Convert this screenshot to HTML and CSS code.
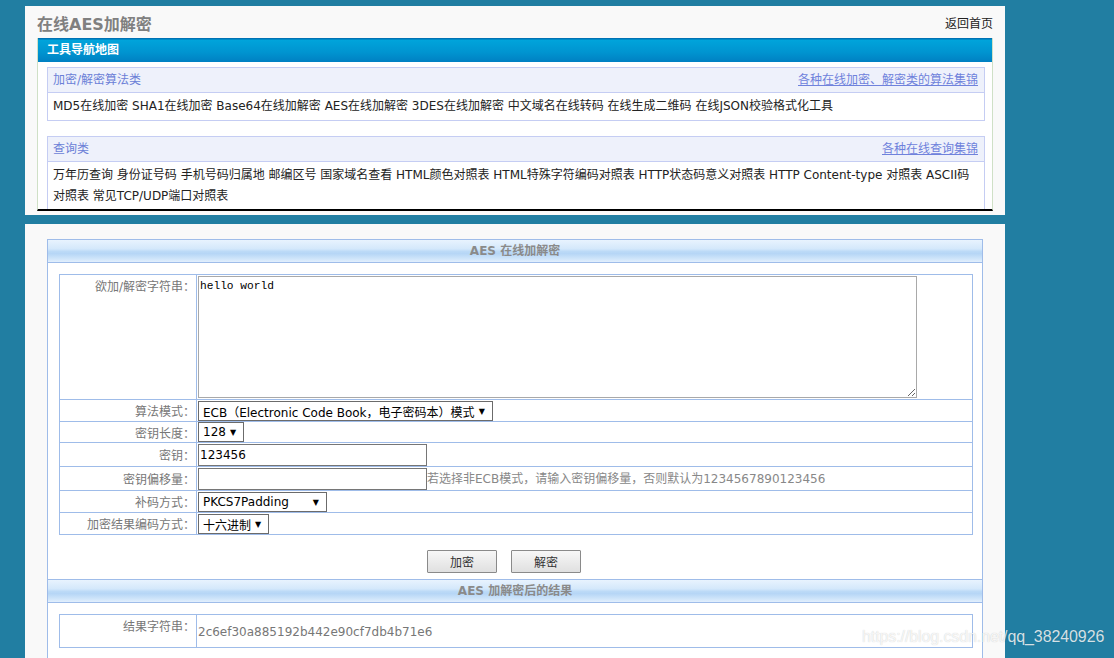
FILE: index.html
```html
<!DOCTYPE html>
<html lang="zh-CN">
<head>
<meta charset="utf-8">
<title>在线AES加解密</title>
<link rel="stylesheet" href="styles.css">
</head>
<body>
<div class="panel panel-top">
  <div class="titlebar">
    <h1 class="title">在线AES加解密</h1>
    <a class="home" href="#">返回首页</a>
  </div>
  <div class="nav">
    <div class="nav-head">工具导航地图</div>
    <div class="sec">
      <div class="sec-head"><span>加密/解密算法类</span><a href="#">各种在线加密、解密类的算法集锦</a></div>
      <div class="sec-body">MD5在线加密 SHA1在线加密 Base64在线加解密 AES在线加解密 3DES在线加解密 中文域名在线转码 在线生成二维码 在线JSON校验格式化工具</div>
    </div>
    <div class="sec sec-last">
      <div class="sec-head"><span>查询类</span><a href="#">各种在线查询集锦</a></div>
      <div class="sec-body sec-body-2">万年历查询 身份证号码 手机号码归属地 邮编区号 国家域名查看 HTML颜色对照表 HTML特殊字符编码对照表 HTTP状态码意义对照表 HTTP Content-type 对照表 ASCII码对照表 常见TCP/UDP端口对照表</div>
    </div>
  </div>
</div>

<div class="panel panel-main">
  <div class="box">
    <div class="band">AES 在线加解密</div>
    <div class="pad">
      <table class="form">
        <tr class="r-text">
          <td class="lab lab-top">欲加/解密字符串：</td>
          <td class="val"><textarea class="txt">hello world</textarea></td>
        </tr>
        <tr class="r-a">
          <td class="lab">算法模式：</td>
          <td class="val"><span class="select w-mode">ECB（Electronic Code Book，电子密码本）模式</span></td>
        </tr>
        <tr class="r-b">
          <td class="lab">密钥长度：</td>
          <td class="val"><span class="select w-len">128</span></td>
        </tr>
        <tr class="r-c">
          <td class="lab">密钥：</td>
          <td class="val"><input class="inp" type="text" value="123456"></td>
        </tr>
        <tr class="r-c">
          <td class="lab">密钥偏移量：</td>
          <td class="val"><input class="inp" type="text" value=""><span class="hint">若选择非ECB模式，请输入密钥偏移量，否则默认为1234567890123456</span></td>
        </tr>
        <tr class="r-a">
          <td class="lab">补码方式：</td>
          <td class="val"><span class="select w-pad">PKCS7Padding</span></td>
        </tr>
        <tr class="r-a">
          <td class="lab">加密结果编码方式：</td>
          <td class="val"><span class="select w-enc">十六进制</span></td>
        </tr>
      </table>
    </div>
    <div class="btns">
      <button class="btn" type="button">加密</button>
      <button class="btn" type="button">解密</button>
    </div>
    <div class="band band-mid">AES 加解密后的结果</div>
    <div class="pad">
      <table class="form result">
        <tr class="r-res">
          <td class="lab lab-top lab-res">结果字符串：</td>
          <td class="val res-val">2c6ef30a885192b442e90cf7db4b71e6</td>
        </tr>
      </table>
    </div>
    <div class="band band-mid band-empty"></div>
  </div>
</div>

<div class="watermark">https://blog.csdn.net/qq_38240926</div>
</body>
</html>
```

FILE: styles.css
```css
html, body {
  margin: 0;
  padding: 0;
}
body {
  background: #217ea2;
  font-family: "DejaVu Sans", "Noto Sans CJK SC", sans-serif;
  font-size: 12px;
  color: #333;
  height: 658px;
  overflow: hidden;
  position: relative;
}
a { color: inherit; text-decoration: none; }

.panel {
  width: 956px;
  margin-left: 25px;
  padding: 0 12px;
  background: #f9f9f9;
}
.panel-top {
  margin-top: 6px;
  padding-bottom: 4px;
}
.titlebar {
  height: 32px;
  display: flex;
  justify-content: space-between;
  align-items: flex-start;
}
.title {
  margin: 0;
  padding-top: 9px;
  font-size: 16px;
  line-height: 20px;
  font-weight: bold;
  color: #808080;
}
.home {
  padding-top: 10px;
  line-height: 16px;
  color: #222;
}

.nav {
  background: #fff;
  border-left: 1px solid #cfe0c6;
  border-right: 1px solid #cfe0c6;
  border-bottom: 2px solid #000;
}
.nav-head {
  height: 24px;
  line-height: 25px;
  padding-left: 9px;
  background: linear-gradient(#0072b4 0, #0072b4 1px, #00a4db 2px, #0094d0 60%, #0080c2 100%);
  color: #fff;
  font-weight: bold;
}
.sec {
  margin: 5px 7px 0 9px;
  border: 1px solid #c5cdf3;
}
.sec-last {
  margin-top: 15px;
  border-bottom: 0;
}
.sec-head {
  height: 24px;
  line-height: 24px;
  padding: 0 6px 0 5px;
  background: #eef1fb;
  border-bottom: 1px solid #c5cdf3;
  display: flex;
  justify-content: space-between;
  color: #6b7fd7;
}
.sec-head a {
  color: #6f82dc;
  text-decoration: underline;
}
.sec-body {
  height: 27px;
  line-height: 26px;
  padding-left: 5px;
  color: #222;
}
.sec-body-2 {
  height: 44px;
  line-height: 21px;
  padding-top: 3px;
  padding-right: 4px;
}

.panel-main {
  margin-top: 9px;
  padding: 15px 22px 0;
  width: 936px;
  height: 419px;
  overflow: hidden;
}
.box {
  background: #fff;
  border: 1px solid #9fbce9;
  width: 934px;
}
.band {
  height: 22px;
  line-height: 23px;
  text-align: center;
  font-weight: bold;
  color: #8a8a8a;
  border-bottom: 1px solid #9fbce9;
  background: linear-gradient(#e8f3fe 0%, #d4e8fb 40%, #bcdaf7 52%, #b6d6f6 62%, #cfe5fa 85%, #e2effd 100%);
}
.band-mid {
  border-top: 1px solid #9fbce9;
}
.pad {
  padding: 11px 9px 0 11px;
}
.form {
  width: 914px;
  border-collapse: collapse;
  border: 1px solid #9fbce9;
}
.form td {
  border: 1px solid #9fbce9;
  padding: 0 1px;
}
.form td.lab {
  width: 134px;
  text-align: right;
  color: #777;
  vertical-align: middle;
  white-space: nowrap;
  padding-right: 1px;
}
.form td.lab-top {
  vertical-align: top;
  padding-top: 4px;
  line-height: 16px;
}
.form td.lab-res {
  padding-top: 4px;
}
.val {
  vertical-align: top;
}
.r-text .val { padding-top: 1px; padding-bottom: 1px; }
.r-a .val { padding-top: 1px; height: 20px; }
.r-b .val { padding-top: 0; height: 20px; }
.r-c .val { padding-top: 1px; height: 22px; }

.txt {
  display: block;
  box-sizing: border-box;
  width: 719px;
  height: 122px;
  margin: 0;
  border: 1px solid #a9a9a9;
  padding: 2px 1px;
  font-family: "Liberation Mono", monospace;
  font-size: 11.2px;
  line-height: 14px;
  color: #000;
  resize: both;
}
.select {
  display: inline-flex;
  align-items: center;
  justify-content: space-between;
  box-sizing: border-box;
  height: 20px;
  padding: 0 7px 0 4px;
  border: 1px solid #6b6b6b;
  background: #fff;
  color: #000;
  vertical-align: top;
  white-space: nowrap;
}
.select::after {
  content: "▼";
  font-size: 8px;
  margin-left: 4px;
}
.w-mode { width: 295px; }
.w-len { width: 46px; }
.w-pad { width: 129px; }
.w-enc { width: 71px; }

.inp {
  box-sizing: border-box;
  width: 229px;
  height: 22px;
  margin: 0;
  padding: 0 1px;
  border: 1px solid #767676;
  font-family: "DejaVu Sans", "Noto Sans CJK SC", sans-serif;
  font-size: 12px;
  color: #000;
  vertical-align: top;
}
.hint {
  color: #888;
  line-height: 22px;
  vertical-align: top;
}

.btns {
  display: flex;
  justify-content: center;
  gap: 14px;
  padding: 15px 22px 6px 0;
}
.btn {
  width: 70px;
  height: 23px;
  margin: 0;
  padding: 0;
  border: 1px solid #8a8a8a;
  border-radius: 1px;
  background: linear-gradient(#f7f7f7, #e0e0e0);
  font-family: "DejaVu Sans", "Noto Sans CJK SC", sans-serif;
  font-size: 12px;
  color: #333;
}

.form.result td.val { height: 30px; vertical-align: middle; padding-top: 2px; }
.res-val {
  color: #777;
  font-size: 12px;
}
.band-empty {
  margin-top: 10px;
  height: 60px;
}

.watermark {
  position: absolute;
  left: 862px;
  top: 627px;
  font-family: "Liberation Sans", sans-serif;
  font-size: 16px;
  line-height: 20px;
  color: rgba(255, 255, 255, 0.82);
  text-shadow: 0 0 1px rgba(0, 0, 0, 0.22);
  letter-spacing: -0.1px;
}
```
